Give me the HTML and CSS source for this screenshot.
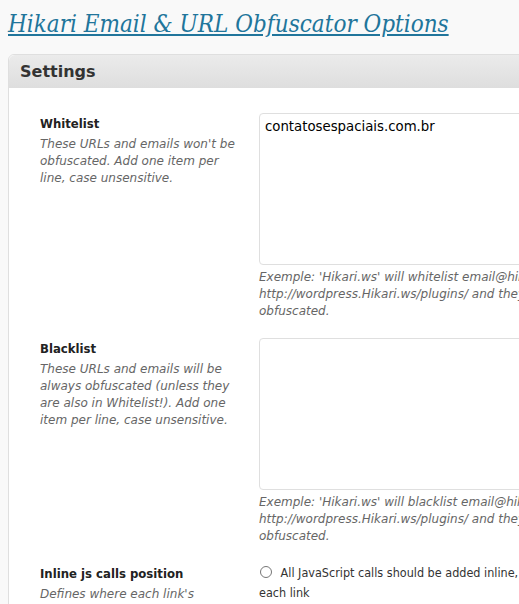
FILE: index.html
```html
<!DOCTYPE html>
<html>
<head>
<meta charset="utf-8">
<link rel="stylesheet" href="styles.css">
</head>
<body>
<div class="wrap">
  <h2 class="title"><a href="#">Hikari Email &amp; URL Obfuscator Options</a></h2>
  <div class="postbox">
    <h3 class="hndle">Settings</h3>
    <div class="inside">
      <div class="row">
        <div class="label">
          <div class="name">Whitelist</div>
          <div class="desc">These URLs and emails won't be obfuscated. Add one item per line, case unsensitive.</div>
        </div>
        <div class="field">
          <textarea class="area">contatosespaciais.com.br</textarea>
          <div class="desc">Exemple: 'Hikari.ws' will whitelist email@hikari.ws and http://wordpress.Hikari.ws/plugins/ and they won't be obfuscated.</div>
        </div>
      </div>
      <div class="row">
        <div class="label">
          <div class="name">Blacklist</div>
          <div class="desc">These URLs and emails will be always obfuscated (unless they are also in Whitelist!). Add one item per line, case unsensitive.</div>
        </div>
        <div class="field">
          <textarea class="area"></textarea>
          <div class="desc">Exemple: 'Hikari.ws' will blacklist email@hikari.ws and http://wordpress.Hikari.ws/plugins/ and they will be obfuscated.</div>
        </div>
      </div>
      <div class="row">
        <div class="label">
          <div class="name">Inline js calls position</div>
          <div class="desc">Defines where each link's JavaScript calls should be added.</div>
        </div>
        <div class="field">
          <label class="radio"><input type="radio" name="pos"> All JavaScript calls should be added inline, right after each link</label>
        </div>
      </div>
    </div>
  </div>
</div>
</body>
</html>
```
FILE: styles.css
```css
html, body {
  margin: 0;
  padding: 0;
  background: #f9f9f9;
  overflow: hidden;
}
.wrap {
  padding: 0 0 0 8px;
  width: 760px;
}
.title {
  margin: 0;
  padding: 6px 0 0 0;
  height: 48px;
  font-family: "DejaVu Serif Condensed", "DejaVu Serif", Georgia, serif;
  font-stretch: condensed;
  font-style: italic;
  font-weight: normal;
  font-size: 24px;
  line-height: 36px;
}
.title a {
  color: #21759b;
  text-decoration: underline;
}
.postbox {
  border: 1px solid #dfdfdf;
  border-radius: 6px 6px 0 0;
  background: #fff;
}
.hndle {
  margin: 0;
  height: 33px;
  padding: 0 0 0 11px;
  background: linear-gradient(to bottom, #ebebeb, #dedede);
  border-radius: 6px 6px 0 0;
  font-family: "DejaVu Sans", Verdana, sans-serif;
  font-size: 16px;
  font-weight: bold;
  color: #333;
  line-height: 34px;
}
.inside {
  padding: 25px 0 0 31px;
  font-family: "DejaVu Sans", Verdana, sans-serif;
  font-size: 12px;
}
.row {
  display: flex;
  margin-bottom: 18px;
}
.label {
  width: 205px;
  padding: 1px 14px 0 0;
  flex: none;
}
.name {
  font-family: "DejaVu Sans Condensed", "DejaVu Sans", sans-serif;
  font-stretch: condensed;
  font-weight: bold;
  font-size: 13px;
  color: #222;
  line-height: 20px;
  margin-bottom: 2px;
}
.desc {
  font-style: italic;
  color: #666;
  line-height: 17px;
}
.field {
  width: 345px;
}
.area {
  display: block;
  box-sizing: border-box;
  width: 345px;
  height: 152px;
  margin: 0 0 4px 0;
  padding: 5px 5px;
  border: 1px solid #dfdfdf;
  border-radius: 4px;
  font-family: "DejaVu Sans", Verdana, sans-serif;
  font-size: 13.3px;
  color: #000;
  resize: none;
}
.radio {
  display: block;
  font-family: "DejaVu Sans Condensed", "DejaVu Sans", sans-serif;
  font-stretch: condensed;
  font-size: 12.5px;
  color: #333;
  line-height: 20px;
}
.radio input {
  margin: 0 5px 0 1px;
  width: 12px;
  height: 12px;
  vertical-align: -1px;
}
```
